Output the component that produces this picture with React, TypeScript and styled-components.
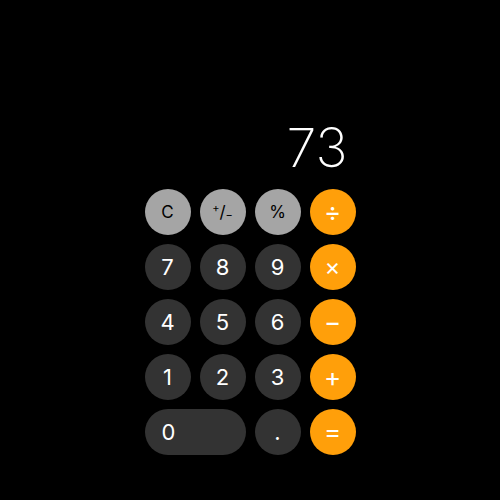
import React from "react";
import styled, { createGlobalStyle } from "styled-components";

const Global = createGlobalStyle`
  html, body { margin: 0; padding: 0; background: #000; }
  body { font-family: Inter, "Noto Sans", sans-serif; }
`;

const Page = styled.div`
  width: 500px;
  height: 500px;
  background: #000;
  display: flex;
  justify-content: center;
  padding-top: 121px;
  box-sizing: border-box;
`;

const Calc = styled.div`
  width: 211px;
  display: flex;
  flex-direction: column;
`;

const Display = styled.div`
  color: #fff;
  font-family: Inter, sans-serif;
  font-weight: 200;
  font-size: 54px;
  line-height: 54px;
  height: 54px;
  text-align: right;
  padding-right: 8px;
  margin-bottom: 14px;
  letter-spacing: 0px;
`;

const Grid = styled.div`
  display: grid;
  grid-template-columns: repeat(4, 46px);
  grid-auto-rows: 46px;
  column-gap: 9px;
  row-gap: 9px;
`;

type Kind = "fn" | "num" | "op";

const bg: Record<Kind, string> = { fn: "#a5a5a5", num: "#333333", op: "#ff9f0a" };
const fg: Record<Kind, string> = { fn: "#000", num: "#fff", op: "#fff" };

const Key = styled.button<{ $kind: Kind; $wide?: boolean; $size?: number }>`
  border: none;
  padding: 0;
  margin: 0;
  border-radius: 23px;
  background: ${(p) => bg[p.$kind]};
  color: ${(p) => fg[p.$kind]};
  font-family: Inter, sans-serif;
  font-weight: 400;
  font-size: ${(p) => p.$size ?? 22}px;
  display: flex;
  align-items: center;
  justify-content: ${(p) => (p.$wide ? "flex-start" : "center")};
  padding-left: ${(p) => (p.$wide ? "17px" : "0")};
  grid-column: ${(p) => (p.$wide ? "span 2" : "auto")};
  line-height: 1;
`;

const Sup = styled.span`
  font-size: 11px;
  transform: translateY(-4px);
  display: inline-block;
`;
const Sub = styled.span`
  font-size: 11px;
  transform: translateY(3px);
  display: inline-block;
`;
const Slash = styled.span`
  font-size: 17px;
  display: inline-block;
`;

export default function App() {
  return (
    <>
      <Global />
      <Page>
        <Calc>
          <Display>73</Display>
          <Grid>
            <Key $kind="fn" $size={17}>C</Key>
            <Key $kind="fn" $size={17}>
              <Sup>+</Sup>
              <Slash>/</Slash>
              <Sub>−</Sub>
            </Key>
            <Key $kind="fn" $size={17}>%</Key>
            <Key $kind="op" $size={26}>÷</Key>
            <Key $kind="num">7</Key>
            <Key $kind="num">8</Key>
            <Key $kind="num">9</Key>
            <Key $kind="op" $size={24}>×</Key>
            <Key $kind="num">4</Key>
            <Key $kind="num">5</Key>
            <Key $kind="num">6</Key>
            <Key $kind="op" $size={26}>−</Key>
            <Key $kind="num">1</Key>
            <Key $kind="num">2</Key>
            <Key $kind="num">3</Key>
            <Key $kind="op" $size={26}>+</Key>
            <Key $kind="num" $wide>0</Key>
            <Key $kind="num">.</Key>
            <Key $kind="op" $size={26}>=</Key>
          </Grid>
        </Calc>
      </Page>
    </>
  );
}
